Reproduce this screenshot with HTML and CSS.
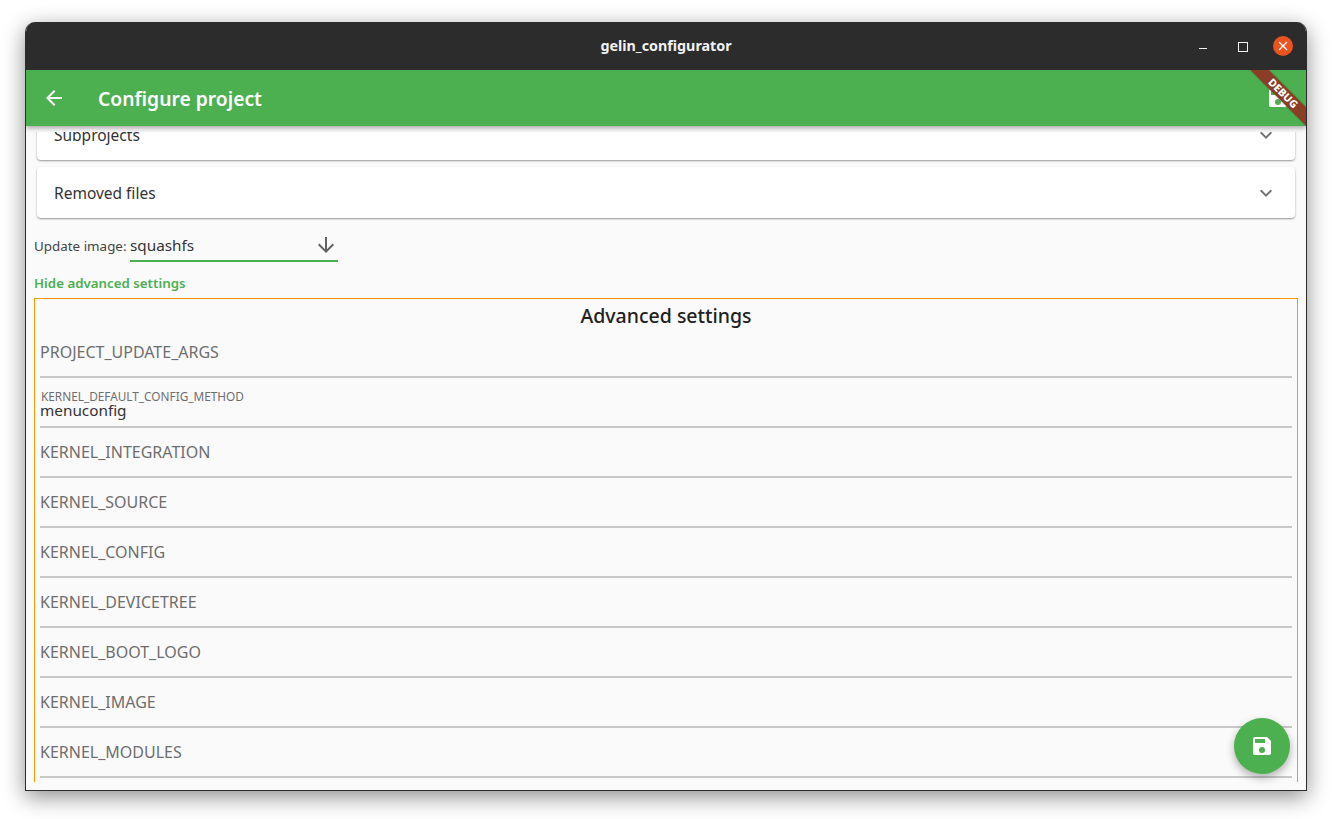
FILE: index.html
```html
<!DOCTYPE html>
<html lang="en">
<head>
<meta charset="utf-8">
<title>gelin_configurator</title>
<link rel="stylesheet" href="styles.css">
</head>
<body>
<div class="window">
  <header class="titlebar">
    <span class="wintitle">gelin_configurator</span>
    <div class="winbtns">
      <span class="wb wb-min"></span>
      <span class="wb wb-max"></span>
      <span class="wb-close"><svg width="10" height="10" viewBox="0 0 10 10"><path d="M1 1l8 8M9 1l-8 8" stroke="#fff" stroke-width="1.2" fill="none"/></svg></span>
    </div>
  </header>
  <div class="appbar">
    <svg class="back" width="24" height="24" viewBox="0 0 24 24"><path fill="#fff" d="M20 11H7.83l5.59-5.59L12 4l-8 8 8 8 1.41-1.41L7.83 13H20v-2z"/></svg>
    <h1 class="apptitle">Configure project</h1>
    <svg class="appsave" width="24" height="24" viewBox="0 0 24 24"><path fill="#fff" d="M17 3H5a2 2 0 0 0-2 2v14a2 2 0 0 0 2 2h14a2 2 0 0 0 2-2V7l-4-4zm-5 16a3 3 0 1 1 0-6 3 3 0 0 1 0 6zm3-10H5V5h10v4z"/></svg>
    <div class="debug"><span>DEBUG</span></div>
  </div>
  <main class="scroller">
    <div class="content">
      <div class="card card-first"><span>Subprojects</span><svg class="chev" width="24" height="24" viewBox="0 0 24 24"><path fill="#757575" d="M16.59 8.59 12 13.17 7.41 8.59 6 10l6 6 6-6z"/></svg></div>
      <div class="card"><span>Removed files</span><svg class="chev" width="24" height="24" viewBox="0 0 24 24"><path fill="#757575" d="M16.59 8.59 12 13.17 7.41 8.59 6 10l6 6 6-6z"/></svg></div>
      <div class="update">
        <span class="update-label">Update image:</span>
        <div class="select"><span>squashfs</span><svg width="24" height="24" viewBox="0 0 24 24"><path fill="#616161" d="M20 12l-1.41-1.41L13 16.17V4h-2v12.17l-5.58-5.59L4 12l8 8 8-8z"/></svg></div>
      </div>
      <div class="hide-link">Hide advanced settings</div>
      <section class="advanced">
        <h2 class="adv-title">Advanced settings</h2>
        <div class="field"><span class="ph">PROJECT_UPDATE_ARGS</span></div>
        <div class="field filled"><span class="mini">KERNEL_DEFAULT_CONFIG_METHOD</span><span class="val">menuconfig</span></div>
        <div class="field"><span class="ph">KERNEL_INTEGRATION</span></div>
        <div class="field"><span class="ph">KERNEL_SOURCE</span></div>
        <div class="field"><span class="ph">KERNEL_CONFIG</span></div>
        <div class="field"><span class="ph">KERNEL_DEVICETREE</span></div>
        <div class="field"><span class="ph">KERNEL_BOOT_LOGO</span></div>
        <div class="field"><span class="ph">KERNEL_IMAGE</span></div>
        <div class="field"><span class="ph">KERNEL_MODULES</span></div>
      </section>
    </div>
    <button class="fab"><svg width="24" height="24" viewBox="0 0 24 24"><path fill="#fff" d="M17 3H5a2 2 0 0 0-2 2v14a2 2 0 0 0 2 2h14a2 2 0 0 0 2-2V7l-4-4zm-5 16a3 3 0 1 1 0-6 3 3 0 0 1 0 6zm3-10H5V5h10v4z"/></svg></button>
  </main>
</div>
</body>
</html>
```
FILE: styles.css
```css
* { box-sizing: border-box; }
html, body { margin: 0; height: 100%; }
body { background: #fff; padding: 22px 25px 28px; font-family: "Noto Sans", "Open Sans", sans-serif; overflow: hidden; }
.window { width: 1282px; height: 769px; display: flex; flex-direction: column; border-radius: 10px 10px 0 0; overflow: hidden; border: 1px solid #2c2c2c; border-top: 0; background: #fafafa; box-shadow: 0 6px 22px rgba(0,0,0,.45); }
.titlebar { height: 48px; flex: none; background: #2c2c2c; display: flex; align-items: center; justify-content: center; position: relative; }
.wintitle { color: #f2f2f2; font-size: 14.3px; font-weight: 700; margin-top: -1px; }
.winbtns { position: absolute; right: 13px; top: 14px; display: flex; align-items: center; }
.wb { width: 40px; height: 20px; display: block; position: relative; }
.wb-min::after { content: ""; position: absolute; left: 6px; top: 12px; width: 8px; height: 1px; background: #f2f2f2; }
.wb-max::after { content: ""; position: absolute; left: 5px; top: 6px; width: 8px; height: 8px; border: 1px solid #f2f2f2; }
.wb-close { width: 20px; height: 20px; border-radius: 50%; background: #e95420; display: flex; align-items: center; justify-content: center; }
.appbar { height: 56px; flex: none; background: #4caf50; display: flex; align-items: center; position: relative; z-index: 2; padding: 0 16px; box-shadow: 0 2px 5px rgba(0,0,0,.35); clip-path: inset(0 0 -10px 0); }
.back { flex: none; }
.apptitle { margin: 1px 0 0 32px; flex: 1; color: #fff; font-size: 19.3px; font-weight: 600; line-height: 54px; }
.appsave { flex: none; }
.debug { position: absolute; right: -29.5px; top: 16.5px; width: 106px; height: 13px; background: #8b3e26; transform: rotate(45deg); text-align: center; box-shadow: 0 0 2px rgba(0,0,0,.25); }
.debug span { display: block; color: #fff; font-size: 10.5px; font-weight: 800; line-height: 13px; letter-spacing: .1px; }
.scroller { flex: 1; min-height: 0; position: relative; overflow: hidden; padding-top: 6px; }
.content { height: 650px; overflow: hidden; padding: 0 8px; }
.card { height: 51px; margin: 0 3px 7px; padding: 0 17px; background: #fff; border-radius: 4px; box-shadow: 0 1px 2px rgba(0,0,0,.4); display: flex; align-items: center; justify-content: space-between; color: #333; font-size: 15.5px; }
.card-first { margin-top: -23px; }
.chev { margin-right: 0; }
.update { display: flex; align-items: center; height: 36px; margin-top: 10px; }
.update-label { font-size: 13.4px; color: #444; width: 96px; flex: none; }
.select { width: 208px; height: 31px; border-bottom: 2px solid #4caf50; display: flex; align-items: center; justify-content: space-between; font-size: 15.3px; color: #333; }
.hide-link { margin-top: 10px; font-size: 13.3px; font-weight: 600; color: #4caf50; line-height: 18px; }
.advanced { margin-top: 6px; border: 1px solid #ff9800; padding: 0 5px; height: 500px; }
.adv-title { margin: 0; height: 29px; text-align: center; font-size: 19.5px; font-weight: 500; color: #212121; line-height: 33px; }
.field { height: 50px; border-bottom: 2px solid #c8c8c8; display: flex; flex-direction: column; justify-content: center; }
.ph { font-size: 16px; color: #6e6e6e; }
.filled { justify-content: flex-end; padding-bottom: 8px; }
.mini { font-size: 11.8px; color: #6e6e6e; line-height: 12px; margin: 0 0 1px 1px; }
.val { font-size: 15.3px; color: #333; line-height: 15px; }
.fab { position: absolute; right: 16px; bottom: 16px; width: 56px; height: 56px; border: 0; border-radius: 50%; background: #4caf50; display: flex; align-items: center; justify-content: center; box-shadow: 0 4px 8px rgba(0,0,0,.3); padding: 0; }
```
